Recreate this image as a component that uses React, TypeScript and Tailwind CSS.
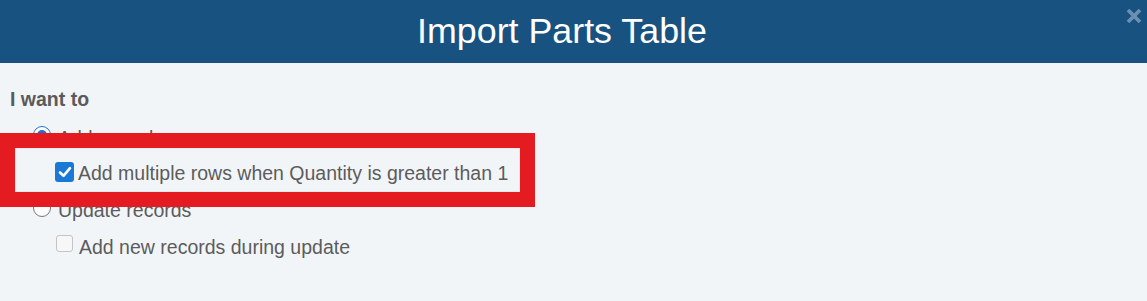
import React from "react";

function Radio({ checked }: { checked?: boolean }) {
  return (
    <span
      className={
        "box-border inline-flex h-[18px] w-[18px] shrink-0 items-center justify-center rounded-full border-[1.5px] bg-white " +
        (checked ? "border-[#1a73d0]" : "border-[#767676]")
      }
    >
      {checked && <span className="h-[10px] w-[10px] rounded-full bg-[#1a73d0]" />}
    </span>
  );
}

function Checkbox({ checked }: { checked?: boolean }) {
  if (checked) {
    return (
      <span className="inline-flex h-[20px] w-[19px] shrink-0 items-center justify-center rounded-[3px] bg-[#1a78d6]">
        <svg width="14" height="12" viewBox="0 0 14 12" fill="none">
          <path d="M2 6.5 L5.5 9.8 L12 2.2" stroke="white" strokeWidth="2.6" strokeLinecap="round" strokeLinejoin="round" />
        </svg>
      </span>
    );
  }
  return (
    <span className="box-border inline-block h-[17px] w-[17px] shrink-0 rounded-[3px] border border-[#c4c4c4] bg-[#f7f7f7]" />
  );
}

export default function App() {
  return (
    <div
      className="relative h-[301px] w-full overflow-hidden bg-[#f2f5f8] text-[#5c5c5c]"
      style={{ fontFamily: '"Liberation Sans", Arial, sans-serif' }}
    >
      <header className="flex h-[63px] items-start bg-[#175280]">
        <h1 className="flex h-[63px] flex-1 items-center justify-center pr-[1px] text-[35.8px] font-normal leading-none text-white">
          Import Parts Table
        </h1>
        <button className="mr-[5px] mt-[8px] flex h-[16px] w-[17px] items-center justify-center">
          <svg width="16" height="16" viewBox="0 0 16 16">
            <path d="M2 2 L14 14 M14 2 L2 14" stroke="#6b90b3" strokeWidth="3.8" strokeLinecap="butt" />
          </svg>
        </button>
      </header>

      <div className="pl-[10px] pt-[19px] text-[19.5px]">
        <div className="flex h-[35px] items-center font-bold text-[#5a5a5a]">I want to</div>
        <label className="flex h-[36px] items-center gap-[7px] pl-[23px]">
          <Radio checked />
          <span className="pt-[8px]">Add records</span>
        </label>
        <label className="flex h-[37px] items-center gap-[4px] pl-[45px]">
          <Checkbox checked />
          <span className="pt-[4px]">Add multiple rows when Quantity is greater than 1</span>
        </label>
        <label className="flex h-[35px] items-center gap-[7px] pl-[23px]">
          <Radio />
          <span className="pt-[6px]">Update records</span>
        </label>
        <label className="flex h-[36px] items-center gap-[6px] pl-[46px]">
          <Checkbox />
          <span className="pt-[9px]">Add new records during update</span>
        </label>
      </div>

      <div className="pointer-events-none absolute left-0 top-[133px] h-[74px] w-[535px] border-[15px] border-[#e41c22]">
        <div className="h-full w-full border border-[#e6e8eb]" />
      </div>
    </div>
  );
}
